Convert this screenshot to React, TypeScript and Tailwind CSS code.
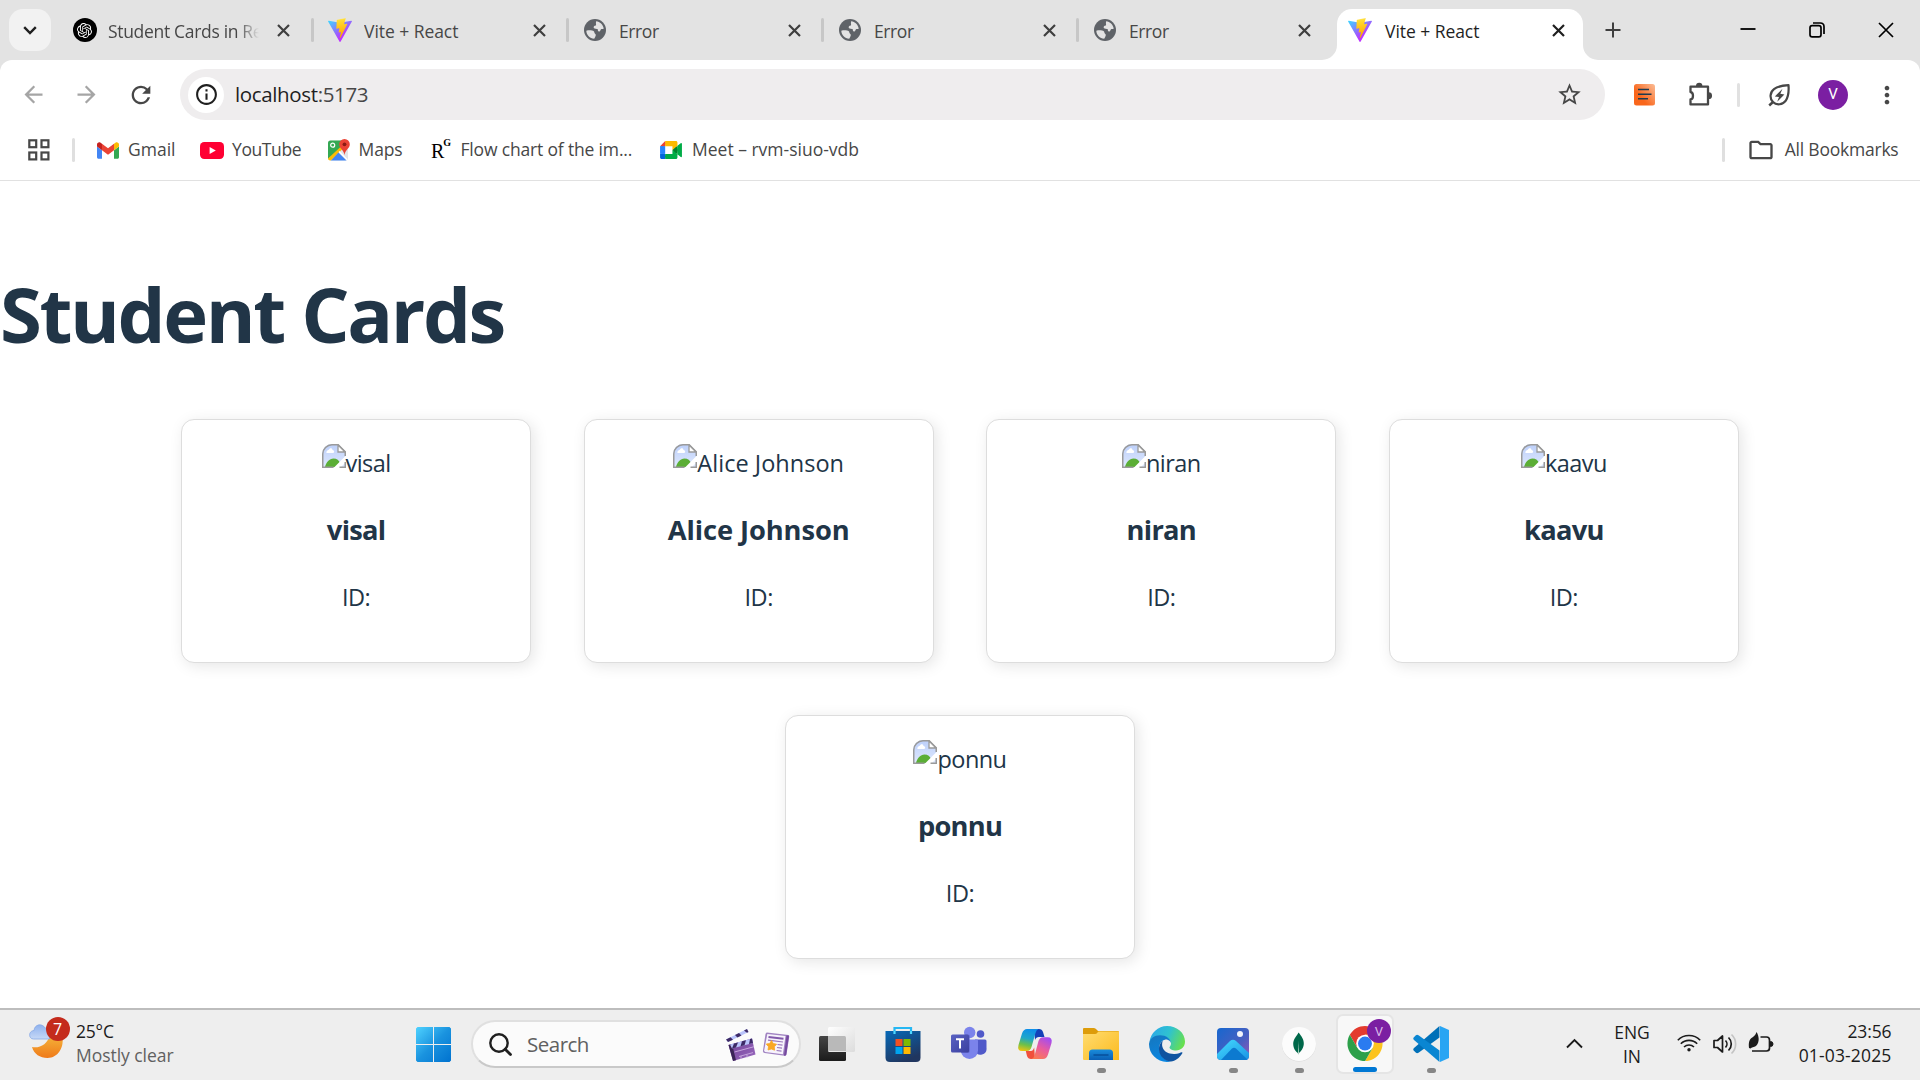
import React from 'react';
import {
  MdArrowBack,
  MdArrowForward,
  MdInfoOutline,
  MdMoreVert,
  MdOutlineFolder,
  MdRefresh,
  MdStarBorder,
} from 'react-icons/md';
import { SiOpenai } from 'react-icons/si';

/* ---------- favicons ---------- */

function ViteLogo() {
  return (
    <svg viewBox="0 0 256 257" className="h-6 w-6">
      <defs>
        <linearGradient id="viteA" x1="-.8%" x2="57.6%" y1="7.6%" y2="78.4%">
          <stop offset="0%" stopColor="#41D1FF" />
          <stop offset="100%" stopColor="#BD34FE" />
        </linearGradient>
        <linearGradient id="viteB" x1="43.4%" x2="50.3%" y1="2.2%" y2="89%">
          <stop offset="0%" stopColor="#FFEA83" />
          <stop offset="8.3%" stopColor="#FFDD35" />
          <stop offset="100%" stopColor="#FFA800" />
        </linearGradient>
      </defs>
      <path fill="url(#viteA)" d="M255.153 37.938L134.897 252.976c-2.483 4.44-8.862 4.466-11.382.048L.875 37.958c-2.746-4.814 1.371-10.646 6.827-9.67l120.385 21.517a6.537 6.537 0 0 0 2.322-.004l117.867-21.483c5.438-.991 9.574 4.796 6.877 9.62Z" />
      <path fill="url(#viteB)" d="M185.432.063L96.44 17.501a3.268 3.268 0 0 0-2.634 3.014l-5.474 92.456a3.268 3.268 0 0 0 3.997 3.378l24.777-5.718c2.318-.535 4.413 1.507 3.936 3.838l-7.361 36.047c-.495 2.426 1.782 4.5 4.151 3.78l15.304-4.649c2.372-.72 4.652 1.36 4.15 3.788l-11.698 56.621c-.732 3.542 3.979 5.473 5.943 2.437l1.313-2.028l72.516-144.72c1.215-2.423-.88-5.186-3.54-4.672l-25.505 4.922c-2.396.462-4.435-1.77-3.759-4.114l16.646-57.705c.677-2.35-1.37-4.583-3.769-4.113Z" />
    </svg>
  );
}

function GlobeIcon() {
  return (
    <svg viewBox="0 0 24 24" className="h-6 w-6">
      <circle cx="12" cy="12" r="11" fill="#5f6368" />
      <path fill="#e3e3e3" d="M3.3 12.8C6 12 9.5 12.400 10.800 13.300C11.600 14 11 15.300 12.300 16C13.500 16.600 12.500 18.500 11.200 20.800C6.800 20.500 3.400 17 3.300 12.800Z" />
      <path fill="#e3e3e3" d="M13.200 3.200C17 3.600 20 6.500 20.700 10.500C19.800 11.500 19 10.600 18 11.200C17 12 17.800 13 16.500 13.400C15 13.800 14.600 12.600 15 11.600C14 10.600 11.400 11.200 10.800 10C10.400 8.800 11.200 7.600 12.600 7.600C13.800 7.500 12.400 5.500 13.200 3.200Z" />
    </svg>
  );
}

function OpenAiIcon() {
  return (
    <span className="flex h-6 w-6 items-center justify-center rounded-full bg-black text-white">
      <SiOpenai size={15} />
    </span>
  );
}

/* ---------- tab strip ---------- */

function Cross({ size, stroke, color }: { size: number; stroke: number; color: string }) {
  return (
    <svg width={size} height={size} viewBox={`0 0 ${size} ${size}`} className="shrink-0">
      <path d={`M1 1L${size - 1} ${size - 1}M${size - 1} 1L1 ${size - 1}`} stroke={color} strokeWidth={stroke} fill="none" />
    </svg>
  );
}

type TabInfo = { icon: React.ReactNode; title: string; divider: boolean; fade?: boolean; tight?: boolean };

const tabs: TabInfo[] = [
  { icon: <OpenAiIcon />, title: 'Student Cards in Re', divider: false, fade: true },
  { icon: <ViteLogo />, title: 'Vite + React', divider: true },
  { icon: <GlobeIcon />, title: 'Error', divider: true, tight: true },
  { icon: <GlobeIcon />, title: 'Error', divider: true, tight: true },
  { icon: <GlobeIcon />, title: 'Error', divider: true, tight: true },
];

function Tab({ icon, title, divider, fade, tight }: TabInfo) {
  return (
    <div className="flex h-[60px] w-[255px] items-center">
      <span className={divider ? 'h-6 w-[3px] rounded-full bg-[#c7c7c7]' : 'h-6 w-[3px]'} />
      <span className="ml-[13.500px] h-6 w-6 shrink-0">{icon}</span>
      <span
        className={
          'mt-[2px] w-[151px] overflow-hidden whitespace-nowrap text-[17.5px] leading-6 text-[#474747] ' +
          (fade
            ? 'ml-[11.500px] [mask-image:linear-gradient(to_right,black_86%,transparent_100%)] tracking-[-0.32px]'
            : tight
              ? 'ml-[12.500px] tracking-[-0.4px]'
              : 'ml-[12.500px] tracking-[-0.05px]')
        }
      >
        {title}
      </span>
      <span className="ml-[17.500px] flex">
        <Cross size={13} stroke={2.2} color="#3f3f3f" />
      </span>
    </div>
  );
}

function TabStrip() {
  return (
    <div className="flex h-[60px] items-center bg-[#e3e3e3]">
      <div className="ml-[9px] flex h-[42px] w-[42px] items-center justify-center rounded-[14px] bg-[#f2f2f2]">
        <svg width="14" height="9" viewBox="0 0 14 9">
          <path d="M1.200 1.200L7 7L12.800 1.200" stroke="#1f1f1f" strokeWidth="2.400" fill="none" />
        </svg>
      </div>
      <div className="ml-[5px] flex">
        {tabs.map((t, i) => (
          <Tab key={i} {...t} />
        ))}
      </div>
      <div className="relative mt-[9px] ml-[6px] flex h-[51px] w-[246px] items-center rounded-t-[15px] bg-white pb-[9px] pl-[11px]">
        <svg className="absolute bottom-0 -left-[15px]" width="15" height="15" viewBox="0 0 15 15">
          <path d="M15 0V15H0A15 15 0 0 0 15 0Z" fill="#fff" />
        </svg>
        <svg className="absolute -right-[15px] bottom-0" width="15" height="15" viewBox="0 0 15 15">
          <path d="M0 0V15H15A15 15 0 0 1 0 0Z" fill="#fff" />
        </svg>
        <ViteLogo />
        <span className="mt-[2px] ml-[13px] w-[149px] whitespace-nowrap text-[17.5px] leading-6 tracking-[-0.05px] text-[#1f1f1f]">Vite + React</span>
        <span className="ml-[18px] flex">
          <Cross size={13} stroke={2.2} color="#1f1f1f" />
        </span>
      </div>
      <svg className="ml-[22px]" width="16" height="16" viewBox="0 0 16 16">
        <path d="M8 0.500V15.500M0.500 8H15.500" stroke="#3f3f3f" strokeWidth="2" />
      </svg>
      <div className="ml-auto flex items-center pr-[26.500px]">
        <svg width="16" height="16" viewBox="0 0 16 16">
          <path d="M0.500 7H15.500" stroke="#000" strokeWidth="1.800" />
        </svg>
        <svg className="ml-[53px]" width="16" height="16" viewBox="0 0 16 16">
          <rect x="1" y="3.600" width="11" height="11.300" rx="2.200" fill="none" stroke="#000" strokeWidth="1.700" />
          <path d="M4 1H11.300C13.500 1 15 2.500 15 4.700V12" fill="none" stroke="#000" strokeWidth="1.700" />
        </svg>
        <span className="ml-[53px] flex">
          <Cross size={16} stroke={1.7} color="#000" />
        </span>
      </div>
    </div>
  );
}

/* ---------- toolbar ---------- */

function LeafIcon() {
  return (
    <svg width="24" height="24" viewBox="0 0 24 24" fill="none">
      <path d="M21.500 2.200C21.500 2.200 22.300 12.500 18.800 17.600C15.800 21.800 9.500 22.600 6 19C2.300 15.300 2.900 9.200 7 6.100C11.500 2.700 21.500 2.200 21.500 2.200Z" stroke="#474747" strokeWidth="2.200" strokeLinejoin="round" />
      <path d="M6 19L2.200 22.500" stroke="#474747" strokeWidth="2.400" />
      <path d="M15.500 5.800L7.800 13.400L12 13.900L10.200 18.700L17.400 11.500L13.300 10.800Z" fill="#474747" />
    </svg>
  );
}

function Toolbar() {
  return (
    <div className="bg-[#e3e3e3]">
      <div className="flex h-[69px] items-center rounded-t-[12px] bg-white text-[#474747]">
        <MdArrowBack size={27} className="ml-[19.500px] text-[#a5a5a5]" />
        <MdArrowForward size={27} className="ml-[26.500px] text-[#a5a5a5]" />
        <MdRefresh size={28} className="ml-[26.500px]" />
        <div className="ml-[25.500px] flex h-[51px] w-[1425px] items-center rounded-full bg-[#efedee]">
          <span className="ml-[8px] flex h-9 w-9 items-center justify-center rounded-full bg-white">
            <MdInfoOutline size={25} className="text-[#1f1f1f]" />
          </span>
          <span className="-mt-[1px] ml-[11px] text-[20.500px] tracking-[-0.36px] text-[#474747]">
            <span className="text-[#1f1f1f]">localhost</span>:5173
          </span>
          <MdStarBorder size={27} className="mr-[22px] ml-auto" />
        </div>
        <svg className="ml-[28px]" width="23" height="23" viewBox="0 0 23 23">
          <defs>
            <linearGradient id="ext" x1="1" y1="0" x2=".3" y2=".6">
              <stop offset="0" stopColor="#fbbd97" />
              <stop offset="1" stopColor="#f9661b" />
            </linearGradient>
          </defs>
          <rect x="1" y="1" width="21" height="21.500" rx="2.500" fill="url(#ext)" />
          <path d="M5 6.500H16M5 11.300H18.500M5 15.800H15" stroke="#1d3a4f" strokeWidth="1.600" />
        </svg>
        <svg className="ml-[31px]" width="26" height="26" viewBox="0 0 26 26" fill="none">
          <path d="M3.500 4.700H21V22.400H3.500V17.500C6.800 17.300 6.800 10.300 3.500 10V4.700Z" stroke="#474747" strokeWidth="2.300" strokeLinejoin="round" />
          <path d="M9 4A3.200 3.200 0 0 1 15.400 4ZM21.700 10.300A3.300 3.300 0 0 1 21.700 17Z" fill="#474747" />
        </svg>
        <span className="ml-[24px] h-6 w-[3px] rounded-full bg-[#e1e1e1]" />
        <span className="ml-[27px] flex">
          <LeafIcon />
        </span>
        <span className="ml-[27px] flex h-[30px] w-[30px] items-center justify-center rounded-full bg-[#7b1fa2] font-[Roboto] text-[15px] text-white">V</span>
        <MdMoreVert size={28} className="ml-[25px]" />
      </div>
    </div>
  );
}

/* ---------- bookmarks ---------- */

function GmailIcon() {
  return (
    <svg viewBox="52 42 88 66" width="22" height="17">
      <path fill="#4285f4" d="M58 108h14V74L52 59v43c0 3.320 2.690 6 6 6" />
      <path fill="#34a853" d="M120 108h14c3.320 0 6-2.690 6-6V59l-20 15" />
      <path fill="#fbbc04" d="M120 48v26l20-15v-8c0-7.420-8.470-11.650-14.400-7.200" />
      <path fill="#ea4335" d="M72 74V48l24 18 24-18v26L96 92" />
      <path fill="#c5221f" d="M52 51v8l20 15V48l-5.600-4.200c-5.940-4.450-14.400-.220-14.400 7.200" />
    </svg>
  );
}

function YouTubeIcon() {
  return (
    <svg viewBox="0 0 24 17" width="24" height="17">
      <rect width="24" height="17" rx="4.200" fill="#ff0033" />
      <path d="M9.600 4.900L15.800 8.500L9.600 12.100Z" fill="#fff" />
    </svg>
  );
}

function MapsIcon() {
  return (
    <svg viewBox="0 0 22 22" width="22" height="22">
      <defs>
        <clipPath id="mapClip">
          <rect x="0" y="1.500" width="20" height="20" rx="2.500" />
        </clipPath>
      </defs>
      <g clipPath="url(#mapClip)">
        <rect width="22" height="22" fill="#e3e5e8" />
        <path d="M0 1H14L12 10L0 20Z" fill="#34a853" />
        <path d="M0 19.500L13.500 7L15.500 9L2.500 22H0Z" fill="#fbbc04" />
        <path d="M10.500 13.500L19 22H2.500Z" fill="#4285f4" />
        <path d="M11 12.500L20.500 22" stroke="#fff" strokeWidth="1.400" />
      </g>
      <circle cx="4.700" cy="6.200" r="2" fill="none" stroke="#fff" strokeWidth="1.200" />
      <path d="M16.500 0A5.300 5.300 0 0 1 21.800 5.300C21.800 9.500 17.500 10.500 16.500 16C15.500 10.500 11.200 9.500 11.200 5.300A5.300 5.300 0 0 1 16.500 0Z" fill="#ea4335" />
      <circle cx="16.500" cy="5.300" r="1.900" fill="#8c1b13" />
    </svg>
  );
}

function MeetIcon() {
  return (
    <svg viewBox="0 0 87.5 72" width="22" height="18">
      <path fill="#00832d" d="M49.500 36l8.530 9.750 11.470 7.330 2-17.020-2-16.640-11.690 6.440z" />
      <path fill="#0066da" d="M0 51.500V66c0 3.315 2.685 6 6 6h14.500l3-10.960-3-9.540-9.950-3z" />
      <path fill="#e94235" d="M20.500 0L0 20.500l10.550 3 9.950-3 2.950-9.410z" />
      <path fill="#2684fc" d="M20.500 20.500H0v31h20.500z" />
      <path fill="#00ac47" d="M82.600 8.680L69.500 19.420v33.660l13.160 10.790c1.970 1.540 4.850.135 4.850-2.370V11c0-2.535-2.945-3.925-4.910-2.320zM49.500 36v15.500h-29V72h43c3.315 0 6-2.685 6-6V53.080z" />
      <path fill="#ffba00" d="M63.500 0h-43v20.500h29V36l20-16.570V6c0-3.315-2.685-6-6-6z" />
    </svg>
  );
}

function BookmarksBar() {
  return (
    <div className="flex h-[52px] items-center border-b border-[#e1e1e1] bg-white pb-[9px] text-[17.500px] whitespace-nowrap text-[#474747]">
      <svg className="ml-[28px]" width="22" height="22" viewBox="0 0 22 22" fill="none" stroke="#474747" strokeWidth="2.200">
        <rect x="1.300" y="1.300" width="6.900" height="6.900" />
        <rect x="13.500" y="1.300" width="6.900" height="6.900" />
        <rect x="1.300" y="13.500" width="6.900" height="6.900" />
        <rect x="13.500" y="13.500" width="6.900" height="6.900" />
      </svg>
      <span className="ml-[22px] h-6 w-[3px] rounded-full bg-[#dfdfdf]" />
      <div className="ml-[22px] flex w-[103px] items-center gap-[9px]">
        <GmailIcon />
        <span className="-mt-px">Gmail</span>
      </div>
      <div className="flex w-[128px] items-center gap-[8px]">
        <YouTubeIcon />
        <span className="-mt-px tracking-[-0.4px]">YouTube</span>
      </div>
      <div className="flex w-[103px] items-center gap-[8.500px]">
        <MapsIcon />
        <span className="-mt-px tracking-[-0.1px]">Maps</span>
      </div>
      <div className="flex w-[229px] items-center">
        <span className="flex w-[28px] items-start font-['Liberation_Serif'] text-[20px] leading-6 text-black">
          <span className="mt-[2px]">R</span>
          <span className="-ml-px text-[10px] leading-3 font-bold">G</span>
        </span>
        <span className="-mt-px ml-[1.500px] tracking-[-0.17px]">Flow chart of the im...</span>
      </div>
      <div className="flex items-center gap-[10px]">
        <MeetIcon />
        <span className="-mt-px">Meet – rvm-siuo-vdb</span>
      </div>
      <span className="ml-auto h-6 w-[3px] rounded-full bg-[#dfdfdf]" />
      <MdOutlineFolder className="ml-[22px]" size={28} />
      <span className="-mt-px mr-[21.500px] ml-[10px] tracking-[-0.22px]">All Bookmarks</span>
    </div>
  );
}

/* ---------- page ---------- */

function BrokenImage() {
  return (
    <svg className="shrink-0" width="24" height="24" viewBox="0 0 24 24">
      <defs>
        <linearGradient id="sky" x1="0" y1="0" x2="0" y2="1">
          <stop offset="0" stopColor="#bccffa" />
          <stop offset="1" stopColor="#dfe9fd" />
        </linearGradient>
        <clipPath id="imgClip">
          <path d="M0 24V10A10 10 0 0 1 10 0H16L24 8V24Z" />
        </clipPath>
      </defs>
      <g clipPath="url(#imgClip)">
        <rect width="24" height="24" fill="url(#sky)" />
        <path d="M4.500 9C4 6.500 6.500 6.200 7 5.500C8 3.600 10.500 4.200 10.500 6C12.500 6 12.800 9 11 9Z" fill="#fff" />
        <path d="M3 23C4 18.500 7.500 14.500 11.500 14.500C15 14.500 17 16.500 18 19V23Z" fill="#5bae36" />
        <path d="M25 10.500L10.500 25H17L25 17Z" fill="#fff" />
      </g>
      <path d="M0.750 24V10C0.750 5 5 0.750 10 0.750H16.200L23.250 7.700V12M0 23.250H11.500" fill="none" stroke="#9a9a9a" strokeWidth="1.500" />
      <path d="M16 1V8H23Z" fill="#fff" stroke="#9a9a9a" strokeWidth="1.300" />
      <path d="M17.500 23.250H24M23.250 18V24" stroke="#9a9a9a" strokeWidth="1.500" />
    </svg>
  );
}

function StudentCard({ name }: { name: string }) {
  const long = name.length > 6;
  return (
    <div className="flex h-[244px] w-[350px] flex-col items-center rounded-[13px] border border-[#dddddd] bg-white pt-6 shadow-[3px_3px_15px_rgba(0,0,0,0.1)]">
      <div className="flex h-9 items-start">
        <BrokenImage />
        <span className={long ? 'text-[23.500px] leading-[39px] tracking-[0.03px]' : 'text-[23.500px] leading-[39px] tracking-[-0.55px]'}>{name}</span>
      </div>
      <h3 className={long ? 'mt-[32px] text-[27.300px] leading-9 font-bold tracking-[-0.1px]' : 'mt-[32px] text-[27.300px] leading-9 font-bold tracking-[-0.75px]'}>{name}</h3>
      <p className="mt-[31px] text-[23.500px] leading-9 tracking-[-0.5px]">ID:</p>
    </div>
  );
}

const students = ['visal', 'Alice Johnson', 'niran', 'kaavu', 'ponnu'];

function Page() {
  return (
    <main className="h-[827px] bg-white pt-[91px] text-[#213547]">
      <h1 className="h-[84px] text-[76px] leading-[84px] font-bold tracking-[-2.400px]">Student Cards</h1>
      <div className="mx-[181px] mt-[63px] flex flex-wrap justify-center gap-x-[52.600px] gap-y-[52px]">
        {students.map((s) => (
          <StudentCard key={s} name={s} />
        ))}
      </div>
    </main>
  );
}

/* ---------- taskbar ---------- */

function WeatherIcon() {
  return (
    <div className="relative h-[42px] w-[42px]">
      <svg width="42" height="42" viewBox="0 0 42 42">
        <defs>
          <linearGradient id="moon" x1="0" y1="0" x2="0" y2="1">
            <stop offset="0" stopColor="#f5b73c" />
            <stop offset="1" stopColor="#ef7a1a" />
          </linearGradient>
          <linearGradient id="cloud" x1="0" y1="0" x2="0" y2="1">
            <stop offset="0" stopColor="#8fb2ee" />
            <stop offset="1" stopColor="#c6d8f6" />
          </linearGradient>
        </defs>
        <path d="M4 30C11 31.500 20 28 22 17L34 18C37 30 30 41 19.500 41C12 41 6 37 4 30Z" fill="url(#moon)" />
        <path d="M5.500 22C0.500 22 0 14 6 13.500C6.500 7 14.500 6 17 11C19.500 11 21.500 14 21.500 22Z" fill="url(#cloud)" stroke="#86a8e4" strokeWidth=".8" />
      </svg>
      <span className="absolute top-0 left-[17.500px] flex h-6 w-6 items-center justify-center rounded-full bg-[#c42b1c] text-[16px] leading-none text-white">7</span>
    </div>
  );
}

function WindowsIcon() {
  return (
    <svg width="35" height="35" viewBox="0 0 35 35">
      <defs>
        <linearGradient id="win" x1="0" y1="0" x2="1" y2="1">
          <stop offset="0" stopColor="#4fd2ff" />
          <stop offset=".5" stopColor="#1a93df" />
          <stop offset="1" stopColor="#0072cf" />
        </linearGradient>
      </defs>
      <path d="M1.500 0H17V17H0V1.500ZM18 0H33.500L35 1.500V17H18ZM0 18H17V35H1.500L0 33.500ZM18 18H35V33.500L33.500 35H18Z" fill="url(#win)" />
    </svg>
  );
}

function ClapperIcon() {
  return (
    <svg width="30" height="33" viewBox="0 0 30 33">
      <defs>
        <linearGradient id="clap" x1="0" y1="0" x2="1" y2="1">
          <stop offset="0" stopColor="#6d3c94" />
          <stop offset="1" stopColor="#9b6cc0" />
        </linearGradient>
      </defs>
      <path d="M0 11.500L21 1L22.500 4L2 14Z" fill="#b9c3fb" />
      <path d="M0 11.500L4.500 9.200L7 11.700L2 14ZM9 7L13 5L15.500 7.500L11.500 9.500ZM18 2.500L21 1L22.500 4L21 4.800Z" fill="#3d2a66" />
      <path d="M2.500 17L26 10.500L29.500 26.500L7 33Z" fill="url(#clap)" />
      <path d="M2.500 17L6 16L10 32.200L7 33Z" fill="#3b2458" />
      <path d="M4 16.600L26 10.500L27 15L6 20.500Z" fill="#b9c3fb" />
      <path d="M8 15.500L12 14.400L10 19.500L6 20.500ZM16 13.300L20 12.200L18.500 17.200L14.500 18.300ZM24 11L26 10.500L27 15L23 16Z" fill="#3d2a66" />
      <path d="M8.500 24L28 18.700M13 28.500L27 24.600M15 28V31M21 26.500V29.500" stroke="#c5a5dd" strokeWidth="1" />
    </svg>
  );
}

function NewsIcon() {
  return (
    <svg width="28" height="26" viewBox="0 0 28 26">
      <path d="M5 1.500L26.500 4Q27.500 4.500 27.200 6L24.500 23.500Q24 25 22.500 24.700L2.500 22Q0.500 21.500 1 19.500L3.500 3Q4 1.300 5 1.500Z" fill="#a184c2" />
      <path d="M24.500 4.200L27 4.800L24.200 23.800Q23.700 25 22 24.600Z" fill="#75499f" />
      <path d="M5.300 3L23.500 5L20.900 23.200L3.200 20.900Q2 20.600 2.200 19.200Z" fill="#f7f3fc" />
      <path d="M6.500 6L21.500 7.800" stroke="#8259ab" strokeWidth="2" />
      <path d="M6 9.200L21 11M15.500 13.500L20.500 14.100M15 16.500L20 17.100M14.600 19.500L19.500 20.100" stroke="#9a78bb" strokeWidth="1.200" />
      <path d="M9.500 9.500L11.200 12.500L14.600 13.200L12.300 15.800L12.600 19.200L9.300 18L6 19L6.500 15.700L4.300 13L7.700 12.500Z" fill="#f9a825" stroke="#f9a825" strokeWidth=".8" strokeLinejoin="round" />
    </svg>
  );
}

function TaskViewIcon() {
  return (
    <svg width="36" height="36" viewBox="0 0 36 36">
      <defs>
        <linearGradient id="tvD" x1="0" y1="0" x2="0" y2="1">
          <stop offset="0" stopColor="#454545" />
          <stop offset="1" stopColor="#1b1b1b" />
        </linearGradient>
        <linearGradient id="tvL" x1="0" y1="0" x2="1" y2="1">
          <stop offset="0" stopColor="#ffffff" />
          <stop offset="1" stopColor="#dcdcdc" />
        </linearGradient>
      </defs>
      <rect x="0" y="10" width="27" height="25" rx="1.500" fill="url(#tvD)" />
      <rect x="9" y="1" width="27" height="25" rx="1.500" fill="url(#tvL)" />
      <path d="M9 10H25.500Q27 10 27 11.500V25H9Z" fill="#b9b9b9" />
    </svg>
  );
}

function StoreIcon() {
  return (
    <svg width="36" height="36" viewBox="0 0 36 36">
      <defs>
        <linearGradient id="store" x1="0" y1="0" x2=".5" y2="1">
          <stop offset="0" stopColor="#0669b8" />
          <stop offset="1" stopColor="#20365f" />
        </linearGradient>
      </defs>
      <path d="M9.500 8V2H26V8" fill="none" stroke="#25b7f3" strokeWidth="2.200" />
      <path d="M0.500 5H35.500V31.500Q35.500 36 31 36H5Q0.500 36 0.500 31.500Z" fill="url(#store)" />
      <path d="M9.500 5V8M26 5V8" stroke="#4fd8ff" strokeWidth="2.200" />
      <rect x="10.500" y="13" width="7" height="7" fill="#f25022" />
      <rect x="18.500" y="13" width="7" height="7" fill="#7fba00" />
      <rect x="10.500" y="21" width="7" height="7" fill="#00a4ef" />
      <rect x="18.500" y="21" width="7" height="7" fill="#ffb900" />
    </svg>
  );
}

function TeamsIcon() {
  return (
    <svg width="36" height="36" viewBox="0 0 36 36">
      <defs>
        <linearGradient id="teams" x1="0" y1="0" x2="1" y2="1">
          <stop offset="0" stopColor="#5a62c3" />
          <stop offset="1" stopColor="#3a3f9f" />
        </linearGradient>
      </defs>
      <circle cx="29.500" cy="8" r="3.800" fill="#5059c9" />
      <path d="M24 13.500H34Q35.500 13.500 35.500 15V22A6 6 0 0 1 24 25Z" fill="#5059c9" />
      <circle cx="18.700" cy="6.500" r="5.700" fill="#7b83eb" />
      <path d="M10 13.500H26Q27 13.500 27 15V24.500A8.500 8.500 0 0 1 10 24.500Z" fill="#7b83eb" />
      <path d="M14 8.500H17Q19 8.500 19 10.500V25Q19 27 17 27H10V13.500H14Z" fill="#5a60c4" opacity=".6" />
      <rect x="0" y="8.500" width="18" height="18" rx="1.600" fill="url(#teams)" />
      <path d="M5 13.200H13M9 13.200V22.500" stroke="#fff" strokeWidth="2" />
    </svg>
  );
}

function CopilotIcon() {
  return (
    <svg width="36" height="32" viewBox="0 0 36 32">
      <defs>
        <linearGradient id="cpA" x1=".4" y1="0" x2=".2" y2="1">
          <stop offset="0" stopColor="#0f8fe8" />
          <stop offset=".4" stopColor="#1fa7c9" />
          <stop offset=".7" stopColor="#6cc04a" />
          <stop offset="1" stopColor="#f2c40f" />
        </linearGradient>
        <linearGradient id="cpB" x1=".7" y1="0" x2=".2" y2="1">
          <stop offset="0" stopColor="#a44df0" />
          <stop offset=".5" stopColor="#ea5c9c" />
          <stop offset="1" stopColor="#fb7c50" />
        </linearGradient>
      </defs>
      <path d="M17 1H22Q25 1 26 4L27.500 9H22Q19 9 18 12Z" fill="#1340b8" />
      <path d="M18 31H14Q11 31 10 28L8.800 23H14Q16 23 17.200 19.500Z" fill="#f0503c" />
      <path d="M10 1H21.500Q19.500 1.500 18.500 5L14.500 19Q13.300 23 10 23H5Q0 23 1.500 17L5 5.500Q6.500 1 10 1Z" fill="url(#cpA)" />
      <path d="M26 31H14.500Q16.800 30.500 17.700 27L21.500 13Q22.700 9.200 26 9.200H30.500Q35.800 9.200 34.500 15L31 26.500Q29.500 31 26 31Z" fill="url(#cpB)" />
    </svg>
  );
}

function ExplorerIcon() {
  return (
    <svg width="36" height="34" viewBox="0 0 36 34">
      <defs>
        <linearGradient id="fold" x1="0" y1="0" x2="1" y2="1">
          <stop offset="0" stopColor="#ffdc70" />
          <stop offset="1" stopColor="#fbba1e" />
        </linearGradient>
        <linearGradient id="foldB" x1="0" y1="0" x2="0" y2="1">
          <stop offset="0" stopColor="#1a8ddb" />
          <stop offset="1" stopColor="#0a5fb5" />
        </linearGradient>
      </defs>
      <path d="M0 2Q0 1 1 1H10.500Q12 1 13 2L15 4H35Q36 4 36 5V9H0Z" fill="#dd9c0a" />
      <path d="M0 7H12Q13.500 7 14.500 5.500L15.500 4.500H36V33H1Q0 33 0 32Z" fill="url(#fold)" />
      <path d="M6 33V26Q6 22.500 9.500 22.500H26.500Q30 22.500 30 26V33Z" fill="url(#foldB)" />
      <path d="M10.500 28H25.500" stroke="#064a94" strokeWidth="1.300" />
    </svg>
  );
}

function EdgeIcon() {
  return (
    <svg width="36" height="36" viewBox="0 0 36 36">
      <defs>
        <linearGradient id="edA" x1="0" y1=".3" x2="1" y2=".6">
          <stop offset="0" stopColor="#2aa9e8" />
          <stop offset=".5" stopColor="#2fc2d0" />
          <stop offset="1" stopColor="#68e04c" />
        </linearGradient>
        <linearGradient id="edB" x1="0" y1="0" x2=".4" y2="1">
          <stop offset="0" stopColor="#1676bd" />
          <stop offset="1" stopColor="#0a86e0" />
        </linearGradient>
      </defs>
      <path d="M0.500 16C1.500 7 9 0 18 0C28 0 36 7 36 15.500C36 21 32 24.500 27 24.500C23 24.500 20.500 23 20.500 21.500C20.500 20.500 22 20 22 17.500C22 13 17 10 11.500 10C6 10 2 13 0.500 16Z" fill="url(#edA)" />
      <path d="M0 18C0.500 12.500 5.500 9.300 11 9.300C17 9.300 22 12.500 22 17.500C22 15.500 19 13 16.500 13.500C12 14.500 9.500 19 10.500 24C11.500 30 16 34.500 22 35.500C10 38 0 29 0 18Z" fill="url(#edB)" />
      <path d="M14 14.700C12 18 12.500 27.500 25 28C29 28.200 31.500 26.500 32.700 26.300C33.400 26.300 33.600 26.800 33.200 27.500C30.500 32 26 35 22 35.600C15.500 35 10.500 30 10 24C9.600 20 11.500 16.300 14 14.700Z" fill="#0f53a0" />
    </svg>
  );
}

function PhotosIcon() {
  return (
    <svg width="32" height="32" viewBox="0 0 32 32">
      <defs>
        <linearGradient id="phA" x1="0" y1="0" x2="1" y2="1">
          <stop offset="0" stopColor="#1667cf" />
          <stop offset=".6" stopColor="#4b5fc0" />
          <stop offset="1" stopColor="#9a55b8" />
        </linearGradient>
        <linearGradient id="phB" x1="0" y1="0" x2="1" y2="1">
          <stop offset="0" stopColor="#45dcff" />
          <stop offset="1" stopColor="#1a93e4" />
        </linearGradient>
        <clipPath id="phC">
          <rect width="32" height="32" rx="4" />
        </clipPath>
      </defs>
      <g clipPath="url(#phC)">
        <rect width="32" height="32" fill="url(#phA)" />
        <path d="M0 26L13 13Q16 10.500 19 13L32 25V32H0Z" fill="url(#phB)" />
        <path d="M4 32L15 20.500Q17 19 19 20.500L31 32Z" fill="#0c7ad0" />
      </g>
      <circle cx="23" cy="6" r="3" fill="#f3f4fb" />
    </svg>
  );
}

function MongoIcon() {
  return (
    <svg width="36" height="36" viewBox="0 0 36 36">
      <circle cx="18" cy="18.600" r="17" fill="#d8d8d8" />
      <circle cx="18" cy="18" r="17" fill="#fcfcfc" />
      <path d="M17.500 6.500C20.500 10 23 13.500 22.800 18C22.500 22.500 20 25 18 27L17.400 28.500L16.800 27C14.500 25 12.200 22.500 12.200 17.500C12.400 13 15.500 10.500 17.500 6.500Z" fill="#00684a" />
      <path d="M17.500 15L18.100 28H16.900Z" fill="#a9cbbd" />
    </svg>
  );
}

function ChromeIcon() {
  return (
    <svg width="36" height="36" viewBox="0 0 48 48">
      <path d="M24 12H44.780A24 24 0 0 0 3.216 12L13.600 30L24 24Z" fill="#e33b2e" />
      <path d="M34.390 30L24 48A24 24 0 0 0 44.780 12H24L24 24Z" fill="#fcc31e" />
      <path d="M13.608 30L3.216 12A24 24 0 0 0 24 48L34.390 30L24 24Z" fill="#2da04a" />
      <circle cx="24" cy="24" r="12" fill="#fff" />
      <circle cx="24" cy="24" r="9.500" fill="#2a7bf0" />
    </svg>
  );
}

function VsCodeIcon() {
  return (
    <svg width="36" height="36" viewBox="0 0 36 36">
      <path d="M27 0L36 4V32L27 36Z" fill="#29a5f3" />
      <path d="M26.500 0V11.500L5.500 26.700Q4 27.700 2.700 26.500L0.700 24.600Q-0.300 23.300 1 22Z" fill="#0070b8" />
      <path d="M26.500 36V24.500L5.500 9.300Q4 8.300 2.700 9.500L0.700 11.400Q-0.300 12.700 1 14Z" fill="#0a86d2" />
    </svg>
  );
}

function AppSlot({ children, running }: { children: React.ReactNode; running?: boolean }) {
  return (
    <div className="flex h-[70px] w-[66px] flex-col items-center pt-4">
      <span className="flex h-9 items-center">{children}</span>
      <span className={running ? 'mt-[6px] h-[5px] w-[9px] rounded-full bg-[#868686]' : 'h-[5px]'} />
    </div>
  );
}

function Taskbar() {
  return (
    <footer className="flex h-[72px] items-start border-t-2 border-[#bdbdbd] bg-[#eeeeee] text-[17.500px] text-[#1b1b1b]">
      <div className="flex w-[416px] pl-[28px]">
        <div className="mt-[7px]">
          <WeatherIcon />
        </div>
        <div className="mt-[9px] ml-[6px] leading-6 whitespace-nowrap">
          <div className="tracking-[-0.2px]">25°C</div>
          <div className="tracking-[-0.05px] text-[#606060]">Mostly clear</div>
        </div>
      </div>
      <div className="mt-[17px]">
        <WindowsIcon />
      </div>
      <div className="mt-[10px] ml-[20px] flex h-[48px] w-[330px] items-center rounded-full border-2 border-[#e0e0e0] border-b-[#c9c9c9] bg-[#fbfbfb] pl-[16px]">
        <svg width="23" height="23" viewBox="0 0 23 23" fill="none">
          <circle cx="10" cy="10" r="8.700" stroke="#1f1f1f" strokeWidth="2.400" />
          <path d="M16.200 16.200L21.500 21.500" stroke="#1f1f1f" strokeWidth="2.800" strokeLinecap="round" />
        </svg>
        <span className="ml-[15px] text-[20.500px] leading-8 tracking-[-0.5px] text-[#606060]">Search</span>
        <span className="ml-auto flex items-center gap-[6px] pr-[9px]">
          <ClapperIcon />
          <NewsIcon />
        </span>
      </div>
      <div className="ml-[3px] flex">
        <AppSlot>
          <TaskViewIcon />
        </AppSlot>
        <AppSlot>
          <StoreIcon />
        </AppSlot>
        <AppSlot>
          <TeamsIcon />
        </AppSlot>
        <AppSlot>
          <CopilotIcon />
        </AppSlot>
        <AppSlot running>
          <ExplorerIcon />
        </AppSlot>
        <AppSlot>
          <EdgeIcon />
        </AppSlot>
        <AppSlot running>
          <PhotosIcon />
        </AppSlot>
        <AppSlot running>
          <MongoIcon />
        </AppSlot>
        <div className="relative mx-[4px] mt-[4px] flex h-[60px] w-[58px] flex-col items-center rounded-[7px] border-2 border-[#e5e5e5] bg-[#f8f8f8] pt-[10px]">
          <ChromeIcon />
          <span className="mt-[6px] h-[5px] w-6 rounded-full bg-[#0078d4]" />
          <span className="absolute top-[3px] left-[29px] flex h-6 w-6 items-center justify-center rounded-full bg-[#7b1fa2] font-[Roboto] text-[13px] leading-none text-[#d9b9e8]">V</span>
        </div>
        <AppSlot running>
          <VsCodeIcon />
        </AppSlot>
      </div>
      <svg className="mt-[28px] ml-[102px]" width="17" height="11" viewBox="0 0 17 11">
        <path d="M1 9.500L8.500 2L16 9.500" fill="none" stroke="#1b1b1b" strokeWidth="1.900" />
      </svg>
      <div className="mt-[10px] ml-[24px] w-[50px] text-center leading-6 tracking-[-0.1px]">
        <div>ENG</div>
        <div>IN</div>
      </div>
      <svg className="mt-[22px] ml-[20px]" width="24" height="21" viewBox="0 0 24 21" fill="none" stroke="#1b1b1b" strokeWidth="1.600">
        <path d="M0.800 8.200A15.600 15.600 0 0 1 23.200 8.200" />
        <path d="M3.800 11.800A11.500 11.500 0 0 1 20.200 11.800" />
        <path d="M7 15A7.200 7.200 0 0 1 17 15" />
        <circle cx="12" cy="17.800" r="1.700" fill="#1b1b1b" stroke="none" />
      </svg>
      <svg className="mt-[23px] ml-[12px]" width="25" height="22" viewBox="0 0 25 22" fill="none" stroke="#1b1b1b" strokeWidth="1.700">
        <path d="M1 7.500H4.500L9.500 3V19L4.500 14.500H1Z" strokeLinejoin="round" />
        <path d="M12.500 7.500A5 5 0 0 1 12.500 14.500" />
        <path d="M15.500 4.500A9 9 0 0 1 15.500 17.500" />
        <path d="M18.500 1.500A13 13 0 0 1 18.500 20.500" stroke="#c4c4c4" />
      </svg>
      <svg className="mt-[21px] ml-[10px]" width="26" height="22" viewBox="0 0 26 22" fill="none">
        <path d="M12.500 6H18.500Q21.500 6 21.500 9V17Q21.500 20 18.500 20H4" stroke="#1b1b1b" strokeWidth="1.700" />
        <path d="M22.500 10.500Q25 10.500 25 13Q25 15.500 22.500 15.500Z" fill="#1b1b1b" stroke="#1b1b1b" />
        <path d="M8.500 1C11 5 12 11 8 15C6 16.500 3.500 16 2.500 17.500L1 17C0.500 12 1 9 3.500 7C5.500 5.500 7.500 4.500 8.500 1Z" fill="#1b1b1b" />
      </svg>
      <div className="mt-[9px] mr-[28.500px] ml-auto text-right leading-6">
        <div className="tracking-[-0.1px]">23:56</div>
        <div className="tracking-[0.15px]">01-03-2025</div>
      </div>
    </footer>
  );
}

export default function App() {
  return (
    <div className="flex h-[1080px] w-[1920px] flex-col overflow-hidden bg-white font-['Open_Sans','Noto_Sans',sans-serif]">
      <TabStrip />
      <Toolbar />
      <BookmarksBar />
      <Page />
      <Taskbar />
    </div>
  );
}
